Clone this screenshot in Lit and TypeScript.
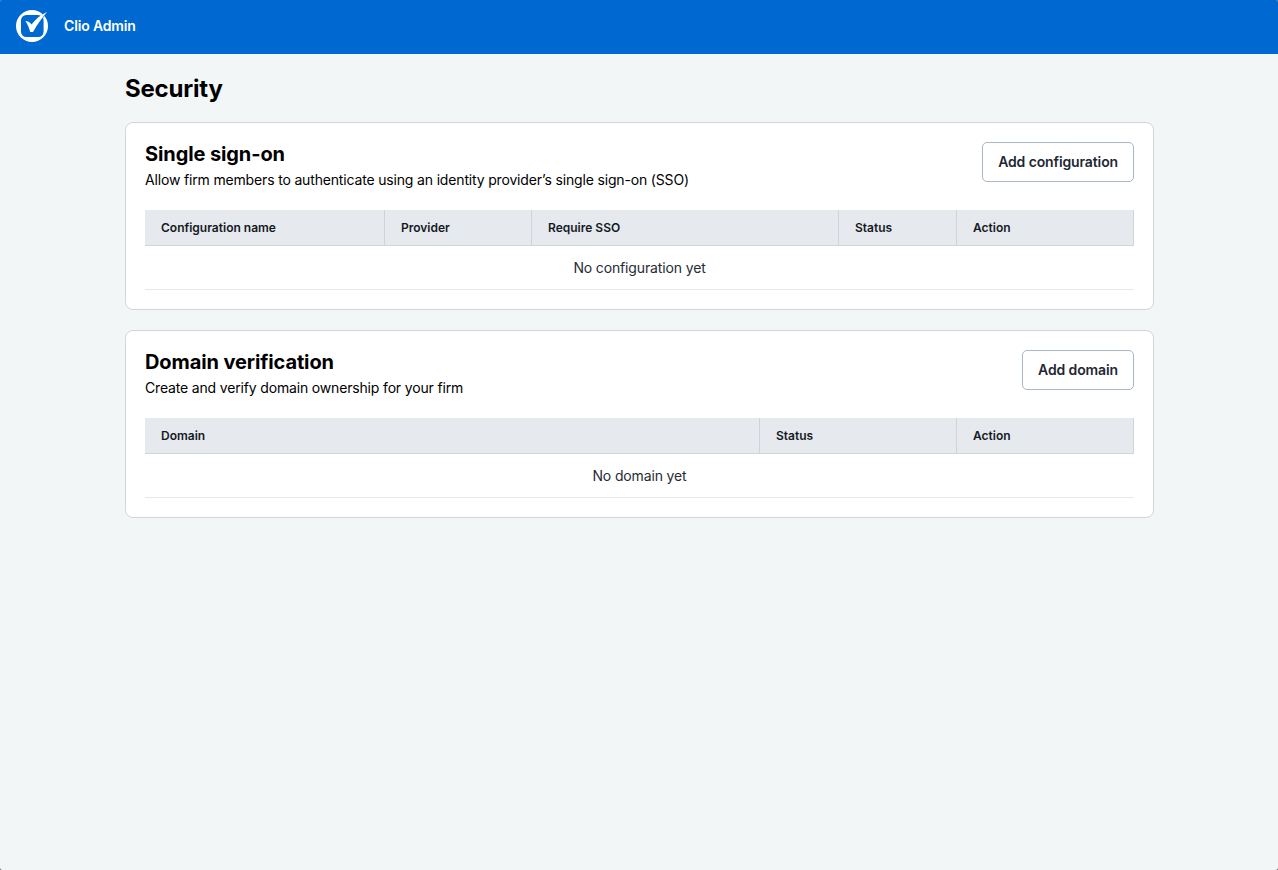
import { LitElement, html, css } from 'lit'
import { customElement, property } from 'lit/decorators.js'

interface Column {
    label: string
    width: number
}

const SSO_COLUMNS: Column[] = [
    { label: 'Configuration name', width: 240 },
    { label: 'Provider', width: 147 },
    { label: 'Require SSO', width: 307 },
    { label: 'Status', width: 118 },
    { label: 'Action', width: 177 },
]

const DOMAIN_COLUMNS: Column[] = [
    { label: 'Domain', width: 615 },
    { label: 'Status', width: 197 },
    { label: 'Action', width: 177 },
]

@customElement('app-header')
export class AppHeader extends LitElement {
    static styles = css`
        :host {
            display: flex;
            align-items: center;
            gap: 16px;
            box-sizing: border-box;
            height: 54px;
            padding: 0 16px 2px;
            background: #0069d1;
            color: #fff;
        }

        .logo {
            display: block;
            width: 32px;
            height: 32px;
            overflow: visible;
        }

        .title {
            font-size: 14px;
            font-weight: 600;
            line-height: 20px;
            letter-spacing: -0.15px;
        }
    `

    render() {
        return html`
            <svg class="logo" viewBox="0 0 32 32" aria-hidden="true">
                <circle cx="16" cy="16" r="16" fill="#fff" />
                <rect x="5" y="5" width="22.6" height="22" rx="5.5" fill="#0069d1" />
                <path d="M26 4.4 L30 2 L28.4 5.8 L27 8 Z" fill="#0069d1" />
                <path d="M9.4 11 C12.2 11.2 14 12.2 15.5 14.6 C19.2 9.4 24.2 5.2 31 2 C26 7.8 21.6 14 17 21.9 H14.2 C13 17.8 11.6 14.2 9.4 11 Z" fill="#fff" />
            </svg>
            <span class="title">Clio Admin</span>
        `
    }
}

@customElement('settings-card')
export class SettingsCard extends LitElement {
    @property({ type: String }) heading = ''
    @property({ type: String }) description = ''
    @property({ type: String }) action = ''
    @property({ type: String }) empty = ''
    @property({ attribute: false }) columns: Column[] = []

    static styles = css`
        :host {
            display: block;
            box-sizing: border-box;
            height: 188px;
            padding: 19px;
            border: 1px solid #d0d7dc;
            border-radius: 8px;
            background: #fff;
        }

        .top {
            display: flex;
            justify-content: space-between;
            align-items: flex-start;
            height: 68px;
        }

        .heading {
            margin: 0;
            font-size: 20px;
            font-weight: 700;
            line-height: 24px;
            letter-spacing: -0.11px;
        }

        .description {
            margin: 4px 0 0;
            font-size: 14px;
            line-height: 20px;
            letter-spacing: -0.165px;
        }

        .button {
            box-sizing: border-box;
            height: 40px;
            padding: 0 15px;
            border: 1px solid #a9b7c3;
            border-radius: 5px;
            background: #fff;
            color: #1f2733;
            font: 600 14px/20px Inter, sans-serif;
            letter-spacing: -0.12px;
        }

        .table {
            width: 989px;
            table-layout: fixed;
            border-collapse: separate;
            border-spacing: 0;
        }

        .head {
            box-sizing: border-box;
            height: 36px;
            padding: 0 16px;
            border-right: 1px solid #ced4da;
            border-bottom: 1px solid #ced4da;
            background: #e6e9ee;
            color: #15191f;
            font-size: 12px;
            font-weight: 600;
            text-align: left;
        }

        .empty {
            box-sizing: border-box;
            height: 44px;
            padding: 0;
            border-bottom: 1px solid #e6e8ea;
            color: #262c33;
            font-size: 14px;
            letter-spacing: -0.14px;
            text-align: center;
        }
    `

    render() {
        return html`
            <div class="top">
                <div>
                    <h2 class="heading">${this.heading}</h2>
                    <p class="description">${this.description}</p>
                </div>
                <button class="button">${this.action}</button>
            </div>
            <table class="table">
                <thead>
                    <tr>
                        ${this.columns.map(
                            (column) => html`<th class="head" style="width: ${column.width}px">${column.label}</th>`
                        )}
                    </tr>
                </thead>
                <tbody>
                    <tr>
                        <td class="empty" colspan=${this.columns.length}>${this.empty}</td>
                    </tr>
                </tbody>
            </table>
        `
    }
}

@customElement('app-root')
export class AppRoot extends LitElement {
    static styles = css`
        :host {
            display: block;
            height: 870px;
            background: #444;
            color: #000;
            font-family: Inter, sans-serif;
        }

        .window {
            height: 100%;
            overflow: hidden;
            border-radius: 2px;
            background: #f2f6f7;
        }

        .page {
            display: flex;
            flex-direction: column;
            gap: 20px;
            width: 1029px;
            margin: 0 124px 0 125px;
            padding-top: 20px;
        }

        .title {
            margin: 0 0 -2px;
            font-size: 24px;
            font-weight: 700;
            line-height: 30px;
            letter-spacing: -0.2px;
        }
    `

    render() {
        return html`
            <div class="window">
                <app-header></app-header>
                <main class="page">
                    <h1 class="title">Security</h1>
                    <settings-card
                        heading="Single sign-on"
                        description="Allow firm members to authenticate using an identity provider’s single sign-on (SSO)"
                        action="Add configuration"
                        empty="No configuration yet"
                        .columns=${SSO_COLUMNS}
                    ></settings-card>
                    <settings-card
                        heading="Domain verification"
                        description="Create and verify domain ownership for your firm"
                        action="Add domain"
                        empty="No domain yet"
                        .columns=${DOMAIN_COLUMNS}
                    ></settings-card>
                </main>
            </div>
        `
    }
}
